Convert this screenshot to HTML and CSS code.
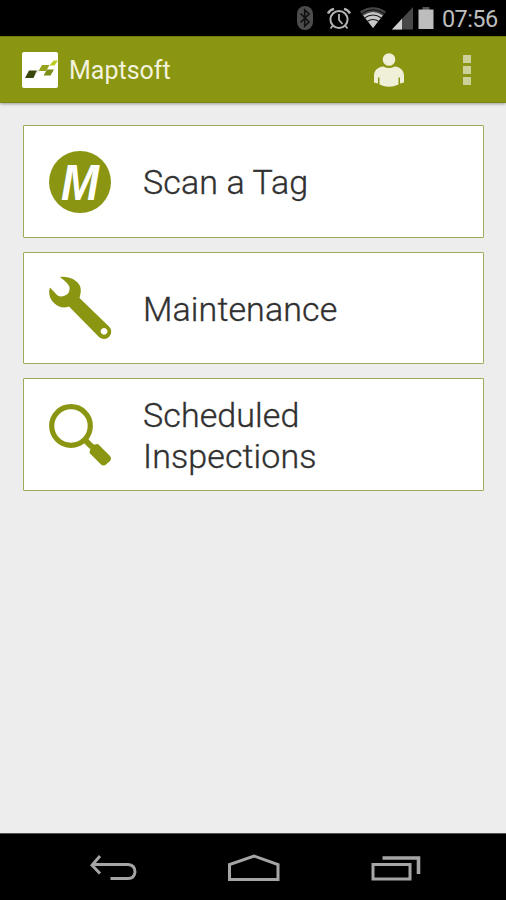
FILE: index.html
```html
<!DOCTYPE html>
<html lang="en">
<head>
<meta charset="utf-8">
<title>Maptsoft</title>
<link rel="stylesheet" href="styles.css">
</head>
<body>
<div class="screen">
  <div class="status">
    <svg class="bt" viewBox="0 0 18 26" width="18" height="26"><rect x="1" y="1" width="16" height="24" rx="8" fill="#4c4c4c"/><path d="M4.500 8.500l8.500 8.500-4.300 4V5l4.300 4-8.500 8.500" fill="none" stroke="#111" stroke-width="1.700"/></svg>
    <svg class="alarm" viewBox="0 0 26 24" width="26" height="24" fill="none" stroke="#b5b5b5"><circle cx="13" cy="13.500" r="8.600" stroke-width="2"/><path d="M13 8v6l3.500 4" stroke-width="1.800"/><path d="M2 7.500Q3.500 4 8 2.800M24 7.500Q22.500 4 18 2.800" stroke-width="2.400"/><path d="M6.500 20l-2 2.500M19.500 20l2 2.500" stroke-width="1.800"/></svg>
    <svg class="wifi" viewBox="0 0 28 24" width="28" height="24"><path d="M14 22L1 5.500Q14-3 27 5.500Z" fill="#484848"/><path d="M14 22L4.200 9.500Q14 2.500 23.800 9.500Z" fill="#c6c6c6"/><path d="M2.500 7.800Q14 0 25.500 7.800M5.500 12Q14 6 22.500 12M8 15.500Q14 11.500 20 15.500" fill="none" stroke="#181818" stroke-width="1.100"/></svg>
    <svg class="signal" viewBox="0 0 22 24" width="22" height="24"><path d="M0 23.500L21 1v22.500Z" fill="#484848"/><path d="M0 23.500L10 12.800v10.700Z" fill="#d0d0d0"/></svg>
    <svg class="battery" viewBox="0 0 16 24" width="16" height="24"><path d="M4.500 1h7v3h-7z" fill="#555"/><path d="M.5 3.500h15V23H.5z" fill="#bdbdbd"/></svg>
    <span class="time">07:56</span>
  </div>
  <header class="bar">
    <svg class="logo" viewBox="0 0 38 38" width="38" height="38"><rect x="1" y="1" width="36" height="36" rx="2" fill="#fff"/><path d="M8 19.500h8l-3.500 7.500H4z" fill="#39460c"/><path d="M21 14h7.500l-3.500 6h-7.500z" fill="#97a31c"/><path d="M26 18.500h7L29.500 24.500h-7z" fill="#7c8e15"/><path d="M32.500 9.500h4.500L33.500 14.500h-5z" fill="#bccc25"/><path d="M14.500 22q3-1 4-4" fill="none" stroke="#d4d8b4"/></svg>
    <h1 class="title">Maptsoft</h1>
    <svg class="person" viewBox="0 0 32 36" width="32" height="36" fill="#f0efd8"><circle cx="16" cy="7.500" r="6.300"/><path d="M10.500 14.500Q16 17.500 21.500 14.500C27 15 31 18 31 24v6.500l-4 1V25.500h-1.500V32.500Q16 37 6.500 32.500V25.500H5V31.500L1 30.500V24C1 18 5 15 10.500 14.500Z"/></svg>
    <span class="more"><i></i><i></i><i></i></span>
  </header>
  <main class="list">
    <div class="card">
      <svg class="icon" viewBox="0 0 64 64" width="64" height="64"><circle cx="32" cy="32" r="31" fill="#8a9512"/><text class="m" x="32" y="49.500" text-anchor="middle" textLength="38" lengthAdjust="spacingAndGlyphs">M</text></svg>
      <span class="label">Scan a Tag</span>
    </div>
    <div class="card">
      <svg class="icon" viewBox="0 0 64 64" width="64" height="64"><path fill="#8a9512" fill-rule="evenodd" d="M12 1C21 0 29 4 32 10C33.500 14 32.500 18 31.500 22L61 50.500A7.200 7.200 0 0 1 51 61L21 30.500C16 32.500 11 31.500 6.500 27.500C1.500 23 0 17 2 11.500L9.500 19.500Q14 21.500 18 19Q22 17 21.500 11Q21 8 12 1ZM56 52a3.400 3.400 0 1 0 .1 0Z"/></svg>
      <span class="label">Maintenance</span>
    </div>
    <div class="card">
      <svg class="icon" viewBox="0 0 64 64" width="64" height="64"><circle cx="23" cy="23" r="19.300" fill="none" stroke="#8a9512" stroke-width="5.200"/><path d="M36 36l8 8" stroke="#8a9512" stroke-width="6"/><path d="M43 42L50 41L62 53Q64 55.500 62 58L58 61.500Q55.500 63.500 53 61.500L41.500 50Z" fill="#8a9512"/></svg>
      <span class="label">Scheduled<br>Inspections</span>
    </div>
  </main>
  <nav class="nav">
    <svg class="back" viewBox="0 0 48 28" width="48" height="28" fill="none" stroke="#a5a5a5" stroke-width="3"><path d="M10 2L2 11.200L10 19.500M2 10.500H38Q45 11 45 18Q44.500 24.500 38 24.500H20.500"/></svg>
    <svg class="home" viewBox="0 0 54 30" width="54" height="30" fill="none" stroke="#a5a5a5" stroke-width="3"><path d="M2.500 26.500V11.500L27 3L51 11.500V26.500Z"/></svg>
    <svg class="recent" viewBox="0 0 50 28" width="50" height="28" fill="none" stroke="#a5a5a5"><path d="M2 10.500H39V25H2Z" stroke-width="3"/><path d="M11.500 4H47.500V20" stroke-width="3.600"/></svg>
  </nav>
</div>
</body>
</html>
```
FILE: styles.css
```css
* { box-sizing: border-box; }
body { margin: 0; font-family: Roboto, sans-serif; background: #ededed; }
svg { display: block; flex: none; }
.screen { width: 506px; height: 900px; display: flex; flex-direction: column; background: #ededed; }
.status { height: 36px; background: #000; display: flex; align-items: center; justify-content: flex-end; padding-right: 8px; flex: none; }
.alarm { margin-left: 12px; }
.wifi { margin-left: 7px; }
.signal { margin-left: 5px; }
.battery { margin-left: 5px; }
.time { margin-left: 8px; width: 56px; font-size: 23.5px; line-height: 36px; color: #bdbdbd; white-space: nowrap; padding-top: 1px; letter-spacing: -0.6px; }
.bt, .alarm, .wifi, .signal { transform: translateX(1px); }
.bar { height: 67px; flex: none; display: flex; align-items: center; background: #8a9512; border-top: 1px solid #727a12; border-bottom: 1px solid #7c8515; box-shadow: 0 1px 3px rgba(0, 0, 0, 0.35); padding: 0 34px 0 21px; }
.title { margin: 2px 0 0 10px; flex: 1; font-size: 25px; font-weight: 400; color: #f3f2dc; letter-spacing: 0; }
.person { margin-right: 58px; }
.more { display: flex; flex-direction: column; gap: 3px; width: 9px; }
.more i { height: 8px; width: 8px; background: #cdd199; }
.list { flex: 1; padding: 22px 22px 0 23px; display: flex; flex-direction: column; gap: 14px; }
.card { height: 112.5px; flex: none; background: #fff; border: 1px solid #a0aa57; border-radius: 1px; display: flex; align-items: center; padding-left: 24px; }
.icon { margin: 1px 31px 0 0; }
.m { font: italic bold 50px "Liberation Sans", sans-serif; fill: #fff; }
.label { font-size: 34px; line-height: 41px; font-weight: 300; color: #303030; padding-top: 3px; letter-spacing: 0.1px; -webkit-text-stroke: 0.35px #303030; }
.nav { height: 67px; flex: none; background: #000; border-top: 1px solid #555; display: flex; align-items: center; padding: 2px 0 0 90px; }
.home { margin-left: 89px; }
.recent { margin-left: 90px; }
```
